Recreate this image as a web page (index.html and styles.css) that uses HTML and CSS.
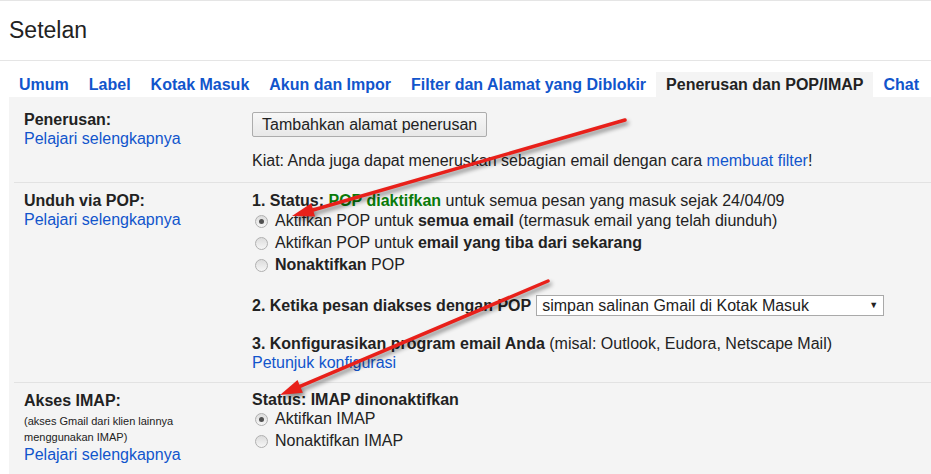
FILE: index.html
```html
<!DOCTYPE html>
<html>
<head>
  <title>Setelan</title>
  <link rel="stylesheet" href="styles.css">
</head>
<body>
  <div class="header">
    <h1>Setelan</h1>
  </div>
  <div class="tabs">
    <a class="tab" href="#">Umum</a>
    <a class="tab" href="#">Label</a>
    <a class="tab" href="#">Kotak Masuk</a>
    <a class="tab" href="#">Akun dan Impor</a>
    <a class="tab" href="#">Filter dan Alamat yang Diblokir</a>
    <span class="tab active">Penerusan dan POP/IMAP</span>
    <a class="tab" href="#">Chat</a>
  </div>

  <div class="content">
    <div class="row first">
      <div class="label-col">
        <div class="label">Penerusan:</div>
        <a class="link" href="#">Pelajari selengkapnya</a>
      </div>
      <div class="value-col">
        <button class="btn">Tambahkan alamat penerusan</button>
        <div class="tip">Kiat: Anda juga dapat meneruskan sebagian email dengan cara <a class="link" href="#">membuat filter</a>!</div>
      </div>
    </div>

    <div class="row pop">
      <div class="label-col">
        <div class="label">Unduh via POP:</div>
        <a class="link" href="#">Pelajari selengkapnya</a>
      </div>
      <div class="value-col">
        <div class="line"><b>1. Status: <span class="green">POP diaktifkan</span></b> untuk semua pesan yang masuk sejak 24/04/09</div>
        <label class="opt"><input type="radio" name="pop" checked>Aktifkan POP untuk <b>semua email</b> (termasuk email yang telah diunduh)</label>
        <label class="opt"><input type="radio" name="pop">Aktifkan POP untuk <b>email yang tiba dari sekarang</b></label>
        <label class="opt"><input type="radio" name="pop"><b>Nonaktifkan</b> POP</label>
        <div class="access">
          <b>2. Ketika pesan diakses dengan POP</b>
          <div class="select">
            <span>simpan salinan Gmail di Kotak Masuk</span>
            <span class="caret">&#9660;</span>
          </div>
        </div>
        <div class="line step3"><b>3. Konfigurasikan program email Anda</b> (misal: Outlook, Eudora, Netscape Mail)</div>
        <a class="link" href="#">Petunjuk konfigurasi</a>
      </div>
    </div>

    <div class="row last">
      <div class="label-col">
        <div class="label">Akses IMAP:</div>
        <div class="small">(akses Gmail dari klien lainnya<br>menggunakan IMAP)</div>
        <a class="link" href="#">Pelajari selengkapnya</a>
      </div>
      <div class="value-col">
        <div class="line imap-status"><b>Status: IMAP dinonaktifkan</b></div>
        <label class="opt"><input type="radio" name="imap" checked>Aktifkan IMAP</label>
        <label class="opt"><input type="radio" name="imap">Nonaktifkan IMAP</label>
      </div>
    </div>
  </div>

  <!-- red annotation arrows drawn over the page -->
  <svg class="arrows" width="931" height="474" viewBox="0 0 931 474">
    <g class="arrow">
      <line x1="625" y1="120" x2="313" y2="210" />
      <polygon points="292,216 315,216.6 311.2,203.2" />
    </g>
    <g class="arrow">
      <line x1="548" y1="281" x2="300" y2="386.4" />
      <polygon points="280,395 302.9,392.8 297.5,380" />
    </g>
  </svg>
</body>
</html>
```

FILE: styles.css
```css
body {
  margin: 0;
  font-family: 'Liberation Sans', Arial, sans-serif;
  font-size: 16px;
  color: #222;
  background: #fff;
  position: relative;
  width: 931px;
  height: 474px;
  overflow: hidden;
}
.header {
  border-top: 1px solid #e5e5e5;
  border-bottom: 1px solid #e5e5e5;
  height: 59px;
}
.header h1 {
  margin: 0;
  padding-left: 9px;
  font-size: 23px;
  font-weight: normal;
  line-height: 58px;
  color: #222;
}
.tabs {
  display: flex;
  margin-top: 11px;
  padding-left: 9px;
  white-space: nowrap;
}
.tab {
  padding: 0 10px;
  line-height: 25px;
  font-size: 16px;
  font-weight: bold;
  color: #15c;
  text-decoration: none;
}
.tab.active {
  background: #f4f4f4;
  color: #222;
}
.content {
  margin-left: 9px;
  padding-left: 5px;
  background: #f4f4f4;
  height: 400px;
}
.row {
  display: flex;
  padding: 8px 0 11px 10px;
  border-bottom: 1px solid #e2e2e2;
  line-height: 19px;
}
.row.first {
  padding-top: 13px;
  padding-bottom: 12px;
}
.row.pop {
  padding-bottom: 10px;
}
.row.last {
  border-bottom: none;
}
.label-col {
  width: 228px;
  flex-shrink: 0;
}
.label {
  font-weight: bold;
}
.link {
  color: #15c;
  text-decoration: none;
  display: inline-block;
}
.small {
  font-size: 11px;
  line-height: 16px;
  margin-top: 3px;
}
.value-col {
  flex: 1;
  white-space: nowrap;
}
.btn {
  display: block;
  margin-top: 2px;
  height: 25px;
  padding: 0 9px;
  font-family: 'Liberation Sans', Arial, sans-serif;
  font-size: 16px;
  color: #222;
  background: linear-gradient(#f7f7f7, #e8e8e8);
  border: 1px solid #acacac;
  border-radius: 2px;
}
.tip {
  margin-top: 14px;
}
.green {
  color: #0a7a0a;
}
.opt {
  display: block;
  line-height: 22px;
}
.imap-status {
  line-height: 17px;
}
.opt input {
  appearance: none;
  display: inline-block;
  vertical-align: -2px;
  width: 13px;
  height: 13px;
  margin: 0 7px 0 3px;
  border: 1px solid #b0b0b0;
  border-radius: 50%;
  background: linear-gradient(#dcdcdc, #f6f6f6);
  position: relative;
}
.opt input:checked::after {
  content: '';
  position: absolute;
  left: 3px;
  top: 3px;
  width: 5px;
  height: 5px;
  border-radius: 50%;
  background: #505050;
}
.access {
  display: flex;
  align-items: center;
  gap: 5px;
  margin-top: 19px;
}
.select {
  display: flex;
  justify-content: space-between;
  align-items: center;
  width: 336px;
  height: 19px;
  padding: 0 5px 0 5px;
  background: #fff;
  border: 1px solid #a9a9a9;
}
.caret {
  font-size: 9px;
}
.step3 {
  margin-top: 18px;
}
.arrows {
  position: absolute;
  left: 0;
  top: 0;
  pointer-events: none;
}
.arrow {
  filter: drop-shadow(2px 3px 2px rgba(0, 0, 0, 0.45));
}
.arrow line {
  stroke: #e8201a;
  stroke-width: 3.5;
  stroke-linecap: round;
}
.arrow polygon {
  fill: #e8201a;
}
```
